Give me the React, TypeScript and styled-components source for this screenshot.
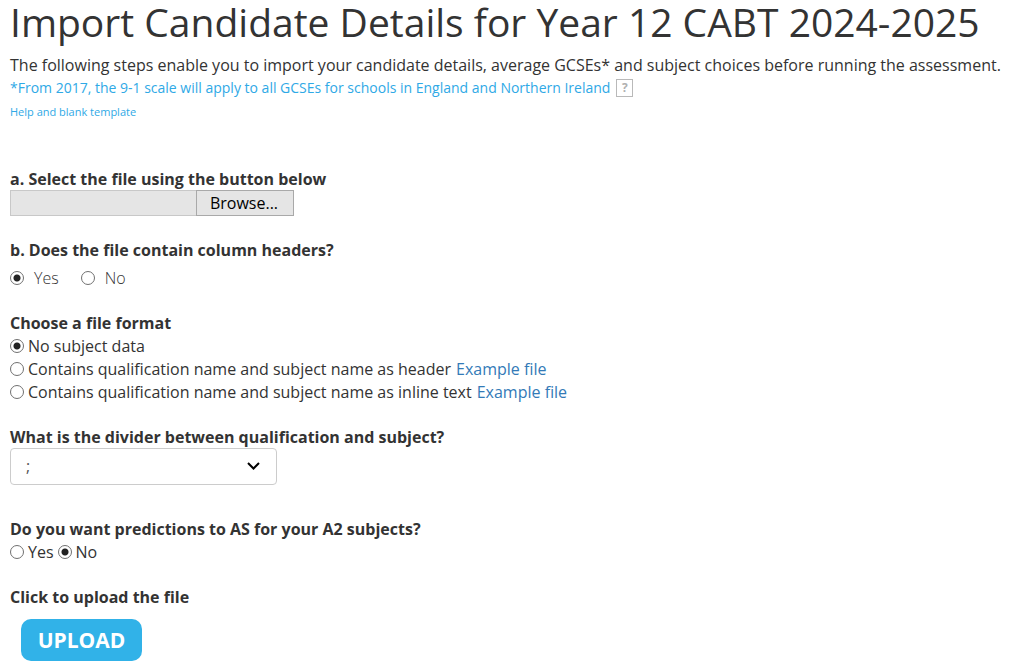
import React, { useRef, useState } from "react";
import styled, { createGlobalStyle } from "styled-components";

const GlobalStyle = createGlobalStyle`
  *, *::before, *::after { box-sizing: border-box; }
  body {
    margin: 0;
    background: #fff;
    color: #333;
    font: 16px/23px "Open Sans", sans-serif;
  }
  input, button, select { font: inherit; margin: 0; }
`;

const Page = styled.main`
  padding: 0 5px 0 10px;
`;

const Title = styled.h1`
  margin: 0 0 11px;
  font-size: 39px;
  line-height: 43px;
  font-weight: 400;
`;

const Intro = styled.p`
  margin: 0;
`;

const Note = styled.p`
  display: flex;
  align-items: center;
  gap: 6px;
  margin: 0 0 2px;
  font-size: 14px;
  line-height: 21px;
  color: #2fa9e6;
`;

const HelpButton = styled.button`
  width: 17px;
  height: 18px;
  padding: 0;
  border: 1px solid #b9b9b9;
  background: #fff;
  color: #b0b0b0;
  font-size: 12px;
  line-height: 16px;
  font-weight: 700;
`;

const TemplateLink = styled.a`
  display: block;
  width: fit-content;
  font-size: 11px;
  color: #2fa9e6;
  text-decoration: none;
`;

const Form = styled.form`
  padding-top: 45px;
`;

const Section = styled.section<{ $after?: number }>`
  margin-bottom: ${(p) => p.$after ?? 22}px;
`;

const Heading = styled.h2`
  display: block;
  margin: 0;
  font-size: 16px;
  line-height: 23px;
  font-weight: 700;
`;

const FilePicker = styled.div`
  display: flex;
  height: 26px;
  margin-top: -1px;
`;

const FileName = styled.input`
  width: 186px;
  padding: 0 6px;
  border: 1px solid #c8c8c8;
  border-right: 0;
  background: #e5e5e5;
  color: #333;
`;

const BrowseButton = styled.button`
  width: 98px;
  padding: 0 2px 0 0;
  border: 1px solid #a9a9a9;
  border-radius: 0;
  background: #e5e5e5;
  color: #000;
`;

const Options = styled.div<{ $gap?: number; $before?: number; $stacked?: boolean }>`
  display: flex;
  flex-direction: ${(p) => (p.$stacked ? "column" : "row")};
  gap: ${(p) => p.$gap ?? 0}px;
  padding-top: ${(p) => p.$before ?? 0}px;
`;

const Option = styled.div`
  display: flex;
  align-items: flex-start;
  height: 23px;
`;

const Radio = styled.input`
  && { margin-top: 4px; }
  appearance: none;
  flex: none;
  width: 14px;
  height: 14px;
  border: 1px solid #707070;
  border-radius: 50%;
  background: #fff;
  &:checked {
    background: radial-gradient(circle, #222 0 3px, #fff 4px);
  }
`;

const OptionLabel = styled.label<{ $light?: boolean }>`
  padding-left: ${(p) => (p.$light ? 10 : 4)}px;
  font-weight: ${(p) => (p.$light ? 300 : 400)};
`;

const ExampleLink = styled.a`
  margin-left: 5px;
  color: #337ab7;
  text-decoration: none;
`;

const SelectBox = styled.div`
  display: grid;
  width: 267px;
  margin-top: -1px;
  align-items: center;
  & > * { grid-area: 1 / 1; }
`;

const Select = styled.select`
  appearance: none;
  width: 100%;
  height: 37px;
  padding: 0 40px 0 15px;
  border: 1px solid #ccc;
  border-radius: 4px;
  background: #fff;
  color: #555;
`;

const Chevron = styled.svg`
  justify-self: end;
  margin-right: 17px;
  pointer-events: none;
`;

const UploadButton = styled.button`
  display: block;
  min-width: 121px;
  height: 42px;
  margin: 10px 0 0 11px;
  padding: 0 15px;
  border: 0;
  border-radius: 10px;
  background: #31b2e8;
  color: #fff;
  font-size: 21px;
  font-weight: 700;
`;

interface ChoiceProps {
  id: string;
  name: string;
  label: string;
  checked?: boolean;
  light?: boolean;
  example?: boolean;
}

function Choice({ id, name, label, checked, light, example }: ChoiceProps) {
  return (
    <Option>
      <Radio type="radio" id={id} name={name} defaultChecked={checked} />
      <OptionLabel htmlFor={id} $light={light}>{label}</OptionLabel>
      {example && <ExampleLink href="#example">Example file</ExampleLink>}
    </Option>
  );
}

export default function App() {
  const picker = useRef<HTMLInputElement>(null);
  const [fileName, setFileName] = useState("");

  return (
    <>
      <GlobalStyle />
      <Page>
        <Title>Import Candidate Details for Year 12 CABT 2024-2025</Title>
        <Intro>
          The following steps enable you to import your candidate details, average GCSEs* and
          subject choices before running the assessment.
        </Intro>
        <Note>
          *From 2017, the 9-1 scale will apply to all GCSEs for schools in England and Northern Ireland
          <HelpButton type="button">?</HelpButton>
        </Note>
        <TemplateLink href="#help">Help and blank template</TemplateLink>

        <Form onSubmit={(e) => e.preventDefault()}>
          <Section $after={23}>
            <Heading as="label" htmlFor="file-name">a. Select the file using the button below</Heading>
            <FilePicker>
              <FileName id="file-name" readOnly value={fileName} />
              <BrowseButton type="button" onClick={() => picker.current?.click()}>Browse...</BrowseButton>
              <input
                ref={picker}
                type="file"
                hidden
                onChange={(e) => setFileName(e.target.files?.[0]?.name ?? "")}
              />
            </FilePicker>
          </Section>

          <Section>
            <Heading>b. Does the file contain column headers?</Heading>
            <Options $gap={22} $before={5}>
              <Choice id="headers-yes" name="headers" label="Yes" light checked />
              <Choice id="headers-no" name="headers" label="No" light />
            </Options>
          </Section>

          <Section>
            <Heading>Choose a file format</Heading>
            <Options $stacked>
              <Choice id="format-none" name="format" label="No subject data" checked />
              <Choice id="format-header" name="format" label="Contains qualification name and subject name as header" example />
              <Choice id="format-inline" name="format" label="Contains qualification name and subject name as inline text" example />
            </Options>
          </Section>

          <Section $after={33}>
            <Heading as="label" htmlFor="divider">What is the divider between qualification and subject?</Heading>
            <SelectBox>
              <Select id="divider" defaultValue=";">
                <option>;</option>
                <option>:</option>
                <option>-</option>
              </Select>
              <Chevron width="13" height="9" viewBox="0 0 13 9" fill="none" stroke="#000" strokeWidth="2">
                <path d="M1 1l5.500 5.500L12 1" />
              </Chevron>
            </SelectBox>
          </Section>

          <Section>
            <Heading>Do you want predictions to AS for your A2 subjects?</Heading>
            <Options $gap={4}>
              <Choice id="as-yes" name="as" label="Yes" />
              <Choice id="as-no" name="as" label="No" checked />
            </Options>
          </Section>

          <Section $after={0}>
            <Heading>Click to upload the file</Heading>
            <UploadButton type="submit">UPLOAD</UploadButton>
          </Section>
        </Form>
      </Page>
    </>
  );
}
